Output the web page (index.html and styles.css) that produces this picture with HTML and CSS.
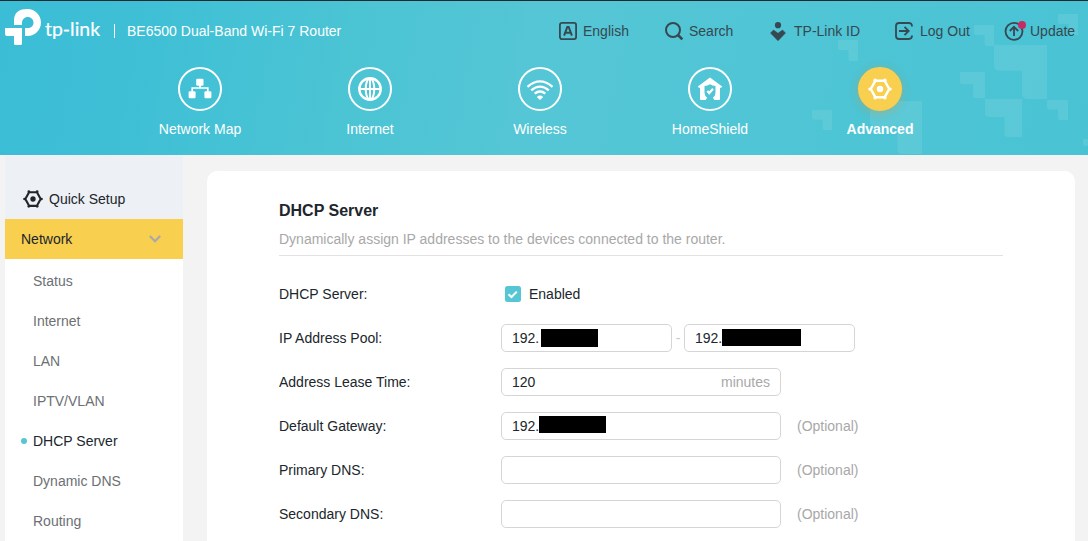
FILE: index.html
```html
<!DOCTYPE html>
<html lang="en">
<head>
<meta charset="utf-8">
<title>BE6500 Dual-Band Wi-Fi 7 Router</title>
<link rel="stylesheet" href="styles.css">
</head>
<body>
<svg class="defs" width="0" height="0" aria-hidden="true">
  <symbol id="gear" viewBox="0 0 24 24">
    <path d="M7.300 3.800h9.400L21.200 12l-4.500 8.200H7.300L2.800 12z" fill="none" stroke="currentColor" stroke-width="2.500" stroke-linejoin="round"/>
    <g fill="currentColor"><circle cx="7" cy="3.200" r="1.600"/><circle cx="17" cy="3.200" r="1.600"/><circle cx="22.200" cy="12" r="1.600"/><circle cx="17" cy="20.800" r="1.600"/><circle cx="7" cy="20.800" r="1.600"/><circle cx="1.800" cy="12" r="1.600"/><circle cx="12" cy="12" r="3.200"/></g>
  </symbol>
  <symbol id="notch" viewBox="0 0 20 20" preserveAspectRatio="none">
    <path d="M0 0h20v20h-7.500q-2 0-2-2V9.500H2q-2 0-2-2z" fill="#fff" fill-opacity=".09"/>
  </symbol>
</svg>
<header class="header">
  <svg class="pattern" width="288" height="155" aria-hidden="true">
    <use href="#notch" x="38" y="40" width="20" height="21"/>
    <use href="#notch" x="258" y="14" width="20" height="21"/>
    <use href="#notch" x="174" y="25" width="20" height="21"/>
    <use href="#notch" x="194" y="45" width="53" height="54"/>
    <use href="#notch" x="160" y="72" width="25" height="26"/>
    <use href="#notch" x="185" y="99" width="37" height="38"/>
    <use href="#notch" x="247" y="100" width="21" height="20"/>
    <use href="#notch" x="283" y="139" width="14" height="14"/>
    <use href="#notch" x="12" y="110" width="20" height="20"/>
    <use href="#notch" x="70" y="101" width="52" height="53"/>
  </svg>
  <div class="topbar">
    <div class="brand">
      <svg width="104" height="44" viewBox="0 0 104 44">
        <path d="M14 20v-4.500C14 6.500 20 4 27.500 4S41 10 41 17.500 35 31 27.500 31H25v-8h3c3.500 0 5.500-2.500 5.500-5.500S31 12 27.800 12 22 14.500 22 17.500V20z" fill="#fff"/>
        <path d="M5 23h17v15.500q0 1.500-1.500 1.500h-5q-1.500 0-1.500-1.500V31H7q-2 0-2-2z" fill="#fff"/>
        <text class="wordmark" x="45" y="31" textLength="55" lengthAdjust="spacingAndGlyphs">tp-link</text>
      </svg>
      <span class="model">BE6500 Dual-Band Wi-Fi 7 Router</span>
    </div>
    <nav class="tools">
      <a class="tool"><svg class="tool-icon" viewBox="0 0 20 20"><rect x="1.900" y="1.900" width="16.200" height="16.200" rx="2" fill="none" stroke="currentColor" stroke-width="1.800"/><path d="M6.100 14.700 9.300 6h1.400l3.200 8.700M7.400 11.800h5.200" fill="none" stroke="currentColor" stroke-width="2"/></svg>English</a>
      <a class="tool"><svg class="tool-icon" viewBox="0 0 20 20"><circle cx="9" cy="9" r="7" fill="none" stroke="currentColor" stroke-width="2"/><path d="m14 14 4.300 4.300" stroke="currentColor" stroke-width="2.600"/></svg>Search</a>
      <a class="tool"><svg class="tool-icon" viewBox="0 0 20 20"><circle cx="9" cy="4.200" r="3.100" fill="currentColor"/><path d="M4.500 9 9 12.300 13.500 9l3 3L9 19.800 1.500 12z" fill="currentColor" stroke="currentColor" stroke-width=".5" stroke-linejoin="round"/></svg>TP-Link ID</a>
      <a class="tool tool-wide"><svg class="tool-icon" viewBox="0 0 20 20" fill="none" stroke="currentColor" stroke-width="1.800"><path d="M18 5.500C18 3 17 2 14.800 2H5C3 2 2 3 2 5v10c0 2 1 3 3 3h9.800c2.200 0 3.200-1 3.200-3.500M5 10h9M10.500 5.800 14.700 10l-4.200 4.200"/></svg>Log Out</a>
      <a class="tool tool-wide"><svg class="tool-icon" viewBox="0 0 20 20" fill="none" stroke="currentColor" stroke-width="1.800"><circle cx="10" cy="10.300" r="8.500"/><path d="M10 15V6.200M5.800 10 10 5.800l4.200 4.200"/><circle cx="18" cy="4" r="4" fill="#c42d63" stroke="none"/></svg>Update</a>
    </nav>
  </div>
  <nav class="tabs">
    <a class="tab"><span class="disc"><svg width="24" height="24" viewBox="0 0 24 24"><g fill="#fff"><rect x="8.200" y="1.800" width="7.300" height="7" rx="1.200"/><rect x=".6" y="14.300" width="7" height="7" rx="1.200"/><rect x="16.400" y="14.300" width="7" height="7" rx="1.200"/></g><path d="M12 8v3M4.200 15v-4h15.600v4" fill="none" stroke="#fff" stroke-width="1.700"/></svg></span>Network Map</a>
    <a class="tab"><span class="disc"><svg width="24" height="24" viewBox="0 0 24 24" fill="none" stroke="#fff"><circle cx="12" cy="12" r="10.700" stroke-width="2.400"/><ellipse cx="12" cy="12" rx="4.300" ry="10.700" stroke-width="2"/><path d="M1 12h22M12 1v22" stroke-width="2"/></svg></span>Internet</a>
    <a class="tab"><span class="disc"><svg width="28" height="24" viewBox="0 0 28 24" fill="none" stroke="#fff" stroke-width="2.300"><path d="M1.500 9.800Q14-1 26.500 9.800M5.200 13.300q8.800-7.300 17.600 0M8.700 16.600q5.300-4.300 10.600 0"/><path d="M10.800 20q3.200-2.800 6.400 0L14 23z" fill="#fff" stroke="none"/></svg></span>Wireless</a>
    <a class="tab"><span class="disc"><svg width="26" height="24" viewBox="0 0 26 24"><path d="M13 .5 25.200 9.500l-1 1.200H23v11q0 1.300-1 1.300H4q-1 0-1-1.300v-11H1.800l-1-1.200z" fill="#fff"/><path d="M13 7.200q2.500 1.600 5.500 1.800v6q0 4-2.700 5.600l1.600 2.400H8.600l1.600-2.400Q7.500 19 7.500 15V9q3-.2 5.500-1.800z" fill="#52c5d5"/><path d="m10.300 13.900 2 2.100 3.700-4.200" fill="none" stroke="#fff" stroke-width="2.200"/></svg></span>HomeShield</a>
    <a class="tab tab-active"><span class="disc"><svg width="24" height="24"><use href="#gear"/></svg></span>Advanced</a>
  </nav>
</header>
<div class="layout">
  <aside class="sidebar">
    <a class="quick"><svg width="20" height="20"><use href="#gear"/></svg>Quick Setup</a>
    <a class="group">Network<svg width="12" height="8" viewBox="0 0 12 8"><path d="m.8 1 5.200 5.200L11.200 1" fill="none" stroke="#a9a9a9" stroke-width="2.300"/></svg></a>
    <a class="item">Status</a>
    <a class="item">Internet</a>
    <a class="item">LAN</a>
    <a class="item">IPTV/VLAN</a>
    <a class="item item-active">DHCP Server</a>
    <a class="item">Dynamic DNS</a>
    <a class="item">Routing</a>
  </aside>
  <main class="panel">
    <h1 class="title">DHCP Server</h1>
    <p class="lead">Dynamically assign IP addresses to the devices connected to the router.</p>
    <div class="row"><span class="label">DHCP Server:</span><span class="check"><svg width="16" height="16" viewBox="0 0 16 16"><rect width="16" height="16" rx="2.500" fill="#56c6d5"/><path d="m3.500 8.300 3 2.700 5.300-5.400" fill="none" stroke="#fff" stroke-width="2"/></svg>Enabled</span></div>
    <div class="row"><span class="label">IP Address Pool:</span><span class="field field-half">192.<i class="mask mask-start"></i></span><span class="dash">-</span><span class="field field-half">192.<i class="mask mask-end"></i></span></div>
    <div class="row"><span class="label">Address Lease Time:</span><span class="field">120<span class="unit">minutes</span></span></div>
    <div class="row"><span class="label">Default Gateway:</span><span class="field">192.<i class="mask mask-gateway"></i></span><span class="hint">(Optional)</span></div>
    <div class="row"><span class="label">Primary DNS:</span><span class="field"></span><span class="hint">(Optional)</span></div>
    <div class="row"><span class="label">Secondary DNS:</span><span class="field"></span><span class="hint">(Optional)</span></div>
  </main>
</div>
</body>
</html>
```
FILE: styles.css
```css
* { box-sizing: border-box; }
body {
  margin: 0;
  height: 541px;
  overflow: hidden;
  background: #f3f3f3;
  color: #20262b;
  font: 14px/20px "Liberation Sans", Arial, sans-serif;
}
svg { display: block; flex: none; }
.defs { position: absolute; }
.header {
  position: relative;
  height: 155px;
  border-top: 1px solid #20292e;
  background: linear-gradient(100deg, #3bbdd6 0%, #3ebfd6 12%, #4bc4d4 32%, #55c6d5 50%, #4fc5d5 72%, #49c3d4 100%);
}
.pattern { position: absolute; right: 0; top: -1px; }
.topbar { position: relative; display: flex; justify-content: space-between; height: 60px; }
.brand { display: flex; align-items: flex-start; padding-top: 4px; color: #fff; }
.wordmark { font: 400 20px Lato, sans-serif; fill: #fff; stroke: #fff; stroke-width: .2px; }
.model { margin: 19px 0 0 10px; padding-left: 12px; border-left: 1px solid #fff; height: 14px; line-height: 14px; white-space: nowrap; letter-spacing: .01px; }
.tools { display: grid; grid-template-columns: 106px 105px 125px 110px 84px; height: 20px; margin-top: 20px; color: #364850; }
.tool { display: flex; gap: 5px; white-space: nowrap; }
.tool-wide { gap: 6px; }
.tool-icon { width: 20px; height: 20px; overflow: visible; }
.tabs { position: relative; display: flex; padding: 6px 0 0 115px; color: #fff; }
.tab { width: 170px; display: flex; flex-direction: column; align-items: center; gap: 8px; }
.disc { display: flex; align-items: center; justify-content: center; width: 44px; height: 44px; border: 2px solid #fff; border-radius: 50%; }
.tab-active { font-weight: 700; }
.tab-active .disc { border-color: #f9cf50; background: #f9cf50; box-shadow: 0 2px 8px rgba(249, 207, 80, .3), 0 2px 8px rgba(120, 90, 90, .25); }
.layout { display: flex; align-items: flex-start; gap: 24px; padding: 0 13px 0 5px; }
.sidebar { width: 178px; height: 386px; background: #fff; color: #6c7074; }
.quick { display: flex; align-items: center; gap: 6px; height: 64px; padding: 24px 0 0 18px; background: #edf0f5; color: #20262b; }
.group { display: flex; align-items: center; justify-content: space-between; height: 40px; padding: 0 22px 0 16px; margin-bottom: 2px; background: #f9cf50; color: #20262b; }
.item { display: flex; align-items: center; height: 40px; padding-left: 28px; }
.item-active { padding-left: 16px; gap: 6px; color: #20262b; }
.item-active::before { content: ""; width: 6px; height: 6px; border-radius: 50%; background: #56c6d5; }
.panel { flex: 1; height: 370px; margin-top: 16px; padding: 30px 72px 0; border-radius: 10px 10px 0 0; background: #fff; }
.title { margin: 0; font-size: 16px; line-height: 20px; }
.lead { margin: 0 0 16px; padding: 8px 0 6px; border-bottom: 1px solid #e2e2e2; color: #a8a8a8; }
.row { display: flex; align-items: center; height: 44px; white-space: nowrap; }
.label { width: 222px; }
.check { display: flex; align-items: center; gap: 8px; padding-left: 4px; }
.field { display: flex; align-items: center; width: 280px; height: 28px; padding: 0 10px; border: 1px solid #d5d5d5; border-radius: 5px; }
.field-half { width: 171px; }
.dash { width: 12px; text-align: center; color: #c8c8c8; }
.unit { margin-left: auto; color: #a8a8a8; }
.hint { margin-left: 16px; color: #a8a8a8; }
.mask { height: 18px; background: #000; }
.mask-start { width: 57px; margin-left: 2px; }
.mask-end { width: 79px; height: 17px; margin-bottom: 1px; }
.mask-gateway { width: 67px; height: 17px; margin-bottom: 3px; }
```
